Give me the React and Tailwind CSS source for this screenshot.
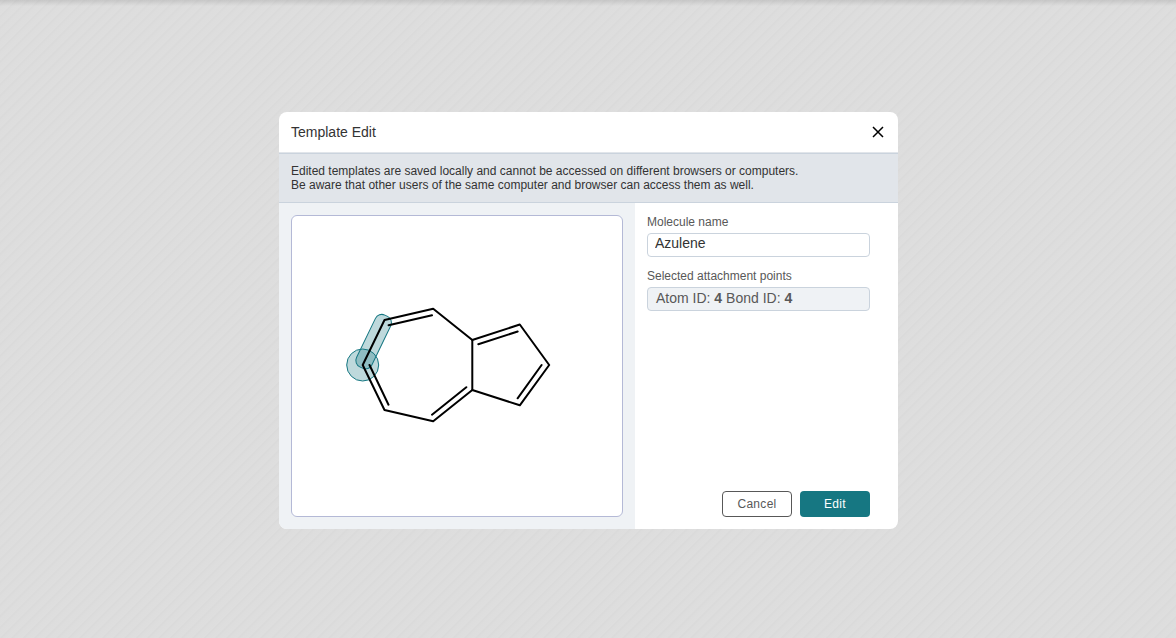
import React, { useState } from "react";

function Molecule() {
  return (
    <svg
      viewBox="0 0 330 300"
      className="block h-[300px] w-full"
      role="img"
      aria-label="Azulene structure"
    >
      <g transform="translate(-292 -216)">
        <circle cx="362.7" cy="365" r="16" fill="#167782" fillOpacity="0.28" stroke="#167782" />
        <rect
          x="-8.5"
          y="-7.5"
          width="17"
          height="57.5"
          rx="7"
          transform="translate(382.9 322.5) rotate(25.8)"
          fill="#167782"
          fillOpacity="0.28"
          stroke="#167782"
        />
        <g fill="none" stroke="#000" strokeWidth="2" strokeLinecap="round" strokeLinejoin="round">
          <path d="M472.3 340 L433.2 308.8 L384.5 320 L362.7 365 L384.5 410 L433.2 421.2 L472.3 390 Z" />
          <path d="M472.3 340 L519.8 324.5 L549.2 365 L519.8 405.3 L472.3 390" />
          <path d="M388.6 325.3 L432 315.3 M369.5 365 L388.5 404.7 M432 414.7 L466.3 387.2 M478.3 344.3 L517.7 331.5 M541.6 365 L517.6 398.3" />
        </g>
      </g>
    </svg>
  );
}

export default function App() {
  const [name, setName] = useState("Azulene");

  return (
    <main className="flex min-h-screen items-center justify-center bg-[linear-gradient(to_bottom,#0000001a_0px,#00000000_6px),repeating-linear-gradient(-45deg,#dedede_0px,#dddddd_5px,#dadada_7px,#dddddd_8px)] pt-[3px] pl-px font-['Liberation_Sans',Arial,sans-serif] text-[#333333]">
      <section
        role="dialog"
        aria-labelledby="dialog-title"
        className="w-full max-w-[619px] overflow-hidden rounded-lg bg-white"
      >
        <header className="flex h-10 items-center justify-between px-3">
          <h1 id="dialog-title" className="text-sm">Template Edit</h1>
          <button type="button" aria-label="Close" className="flex size-4 items-center justify-center text-black">
            <svg viewBox="0 0 16 16" className="size-4" fill="none" stroke="currentColor" strokeWidth="1.5">
              <path d="M3 3 L13 13 M13 3 L3 13" />
            </svg>
          </button>
        </header>
        <div className="h-px bg-[#e1e5ea]" />
        <p className="border-y border-[#cad3dd] bg-[#e1e5ea] px-3 py-[10px] text-xs leading-[14px]">
          Edited templates are saved locally and cannot be accessed on different browsers or computers.
          <br />
          Be aware that other users of the same computer and browser can access them as well.
        </p>
        <form className="flex" onSubmit={(event) => event.preventDefault()}>
          <div className="flex-1 bg-[#eff2f5] p-3">
            <div className="overflow-hidden rounded-md border border-[#b4b9d6] bg-white">
              <Molecule />
            </div>
          </div>
          <div className="flex w-[263px] flex-col pt-3 pr-7 pb-3 pl-3 text-xs text-[#585858]">
            <label htmlFor="molecule-name" className="leading-[14px]">Molecule name</label>
            <input
              id="molecule-name"
              type="text"
              value={name}
              onChange={(event) => setName(event.target.value)}
              className="mt-1 h-6 w-full rounded border border-[#cad3dd] bg-white px-[7px] pb-1 text-sm text-[#333333] outline-none"
            />
            <span id="points-label" className="mt-3 leading-[14px]">Selected attachment points</span>
            <output
              aria-labelledby="points-label"
              className="mt-1 block h-6 rounded border border-[#cad3dd] bg-[#eff2f5] px-2 text-sm leading-5"
            >
              Atom ID: <b>4</b> Bond ID: <b>4</b>
            </output>
            <div className="mt-auto flex justify-end gap-2">
              <button type="button" className="h-[26px] w-[70px] rounded border border-[#585858] bg-white text-xs tracking-wide">
                Cancel
              </button>
              <button type="submit" className="h-[26px] w-[70px] rounded bg-[#167782] text-xs tracking-wide text-white">
                Edit
              </button>
            </div>
          </div>
        </form>
      </section>
    </main>
  );
}
